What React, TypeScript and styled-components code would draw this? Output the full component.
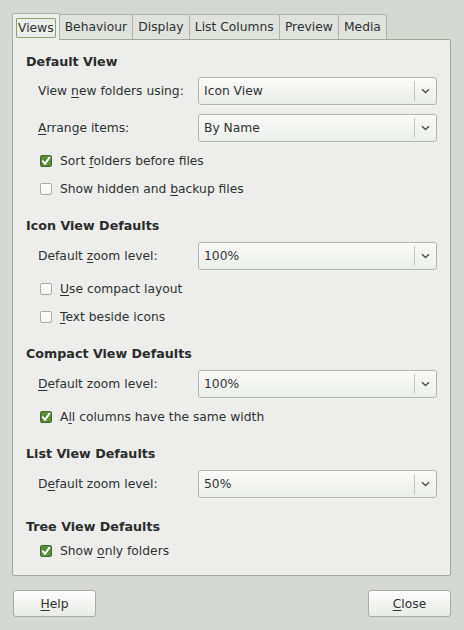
import React from "react";
import styled, { createGlobalStyle } from "styled-components";

const Global = createGlobalStyle`
  html, body { margin: 0; padding: 0; background: #d6d9d3; }
  body { font-family: "DejaVu Sans", "Liberation Sans", sans-serif; }
`;

const Page = styled.div`
  box-sizing: border-box;
  width: 464px;
  height: 630px;
  padding: 13px 13px 13px 12px;
  display: flex;
  flex-direction: column;
  background: #d6d9d3;
  color: #2e3232;
  font-size: 12.3px;
`;

const TabBar = styled.div`
  display: flex;
  align-items: flex-end;
  height: 27px;
  margin-bottom: -1px;
  position: relative;
  z-index: 1;
`;

const Tab = styled.div<{ $active?: boolean }>`
  box-sizing: border-box;
  height: ${(p) => (p.$active ? 27 : 26)}px;
  padding: 0 ${(p) => (p.$active ? 3 : 5.1)}px;
  margin-left: ${(p) => (p.$active ? 0 : -1)}px;
  display: flex;
  align-items: center;
  border: 1px solid #aeb2ab;
  border-bottom: ${(p) => (p.$active ? "none" : "1px solid #a3a89f")};
  border-radius: 2px 2px 0 0;
  background: ${(p) => (p.$active ? "#edeeeb" : "#dfe2dd")};
  &:first-child { margin-left: 0; }
`;

const TabLabel = styled.span<{ $focus?: boolean }>`
  box-sizing: border-box;
  height: 20px;
  display: flex;
  align-items: center;
  padding: 0 ${(p) => (p.$focus ? 1 : 0)}px;
  margin-top: ${(p) => (p.$focus ? 1 : 0)}px;
  border: ${(p) => (p.$focus ? "1px solid #86a86e" : "none")};
  border-radius: 1px;
`;

const Panel = styled.div`
  box-sizing: border-box;
  height: 538px;
  border: 1px solid #a3a89f;
  border-radius: 0 2px 2px 2px;
  background: #edeeeb;
  padding: 14px 13px 0 13px;
  display: flex;
  flex-direction: column;
`;

const Heading = styled.div<{ $mt?: number }>`
  height: 16px;
  line-height: 16px;
  font-weight: bold;
  font-size: 12.7px;
  margin-top: ${(p) => p.$mt ?? 0}px;
  color: #2a2c2c;
`;

const SelectRow = styled.div<{ $mt: number }>`
  display: flex;
  align-items: center;
  height: 28px;
  margin-top: ${(p) => p.$mt}px;
  padding-left: 12px;
`;

const RowLabel = styled.div`
  width: 160px;
  flex: none;
`;

const Select = styled.div`
  box-sizing: border-box;
  flex: 1;
  height: 28px;
  display: flex;
  align-items: center;
  border: 1px solid #b2b6ae;
  border-radius: 3px;
  background: linear-gradient(#fbfbfa, #eceeea);
  box-shadow: 0 1px 0 rgba(255, 255, 255, 0.4);
`;

const SelectText = styled.div`
  flex: 1;
  padding-left: 5px;
`;

const SelectArrow = styled.div`
  width: 21px;
  height: 20px;
  border-left: 1px solid #c2c5bf;
  display: flex;
  align-items: center;
  justify-content: center;
`;

const CheckRow = styled.label<{ $mt: number }>`
  display: flex;
  align-items: center;
  height: 28px;
  margin-top: ${(p) => p.$mt}px;
  padding-left: 14px;
  gap: 8px;
`;

const Box = styled.span<{ $checked?: boolean }>`
  box-sizing: border-box;
  width: 12px;
  height: 12px;
  flex: none;
  border: 1px solid ${(p) => (p.$checked ? "#3f6a27" : "#a9ada5")};
  border-radius: 2px;
  background: ${(p) => (p.$checked ? "#5b8b3b" : "linear-gradient(#ffffff, #f3f4f2)")};
  display: flex;
  align-items: center;
  justify-content: center;
`;

const Mn = styled.span`
  text-decoration: underline;
  text-underline-offset: 2px;
`;

const Footer = styled.div`
  display: flex;
  justify-content: space-between;
  margin-top: 14px;
  padding-left: 1px;
`;

const Button = styled.div`
  box-sizing: border-box;
  width: 83px;
  height: 27px;
  display: flex;
  align-items: center;
  justify-content: center;
  border: 1px solid #a9ada6;
  border-radius: 3px;
  background: linear-gradient(#fdfdfd, #e9ebe7);
`;

const Chevron = () => (
  <svg width="9" height="6" viewBox="0 0 9 6">
    <path d="M1 1.2 L4.5 4.5 L8 1.2" fill="none" stroke="#4a4c4a" strokeWidth="1.3" />
  </svg>
);

const Check = () => (
  <svg width="10" height="10" viewBox="0 0 10 10">
    <path d="M1.8 5.2 L4 8 L8.4 1.6" fill="none" stroke="#ffffff" strokeWidth="2" strokeLinecap="round" strokeLinejoin="round" />
  </svg>
);

const Dropdown = ({ mt, label, value }: { mt: number; label: React.ReactNode; value: string }) => (
  <SelectRow $mt={mt}>
    <RowLabel>{label}</RowLabel>
    <Select>
      <SelectText>{value}</SelectText>
      <SelectArrow>
        <Chevron />
      </SelectArrow>
    </Select>
  </SelectRow>
);

const CheckItem = ({ mt, checked, children }: { mt: number; checked?: boolean; children: React.ReactNode }) => (
  <CheckRow $mt={mt}>
    <Box $checked={checked}>{checked && <Check />}</Box>
    <span>{children}</span>
  </CheckRow>
);

export default function App() {
  return (
    <>
      <Global />
      <Page>
        <TabBar>
          <Tab $active>
            <TabLabel $focus>Views</TabLabel>
          </Tab>
          <Tab><TabLabel>Behaviour</TabLabel></Tab>
          <Tab><TabLabel>Display</TabLabel></Tab>
          <Tab><TabLabel>List Columns</TabLabel></Tab>
          <Tab><TabLabel>Preview</TabLabel></Tab>
          <Tab><TabLabel>Media</TabLabel></Tab>
        </TabBar>
        <Panel>
          <Heading>Default View</Heading>
          <Dropdown mt={7} label={<>View <Mn>n</Mn>ew folders using:</>} value="Icon View" />
          <Dropdown mt={9} label={<><Mn>A</Mn>rrange items:</>} value="By Name" />
          <CheckItem mt={5} checked>Sort <Mn>f</Mn>olders before files</CheckItem>
          <CheckItem mt={0}>Show hidden and <Mn>b</Mn>ackup files</CheckItem>

          <Heading $mt={15}>Icon View Defaults</Heading>
          <Dropdown mt={8} label={<>Default <Mn>z</Mn>oom level:</>} value="100%" />
          <CheckItem mt={5}><Mn>U</Mn>se compact layout</CheckItem>
          <CheckItem mt={0}><Mn>T</Mn>ext beside icons</CheckItem>

          <Heading $mt={15}>Compact View Defaults</Heading>
          <Dropdown mt={8} label={<><Mn>D</Mn>efault zoom level:</>} value="100%" />
          <CheckItem mt={5} checked>A<Mn>l</Mn>l columns have the same width</CheckItem>

          <Heading $mt={15}>List View Defaults</Heading>
          <Dropdown mt={8} label={<>D<Mn>e</Mn>fault zoom level:</>} value="50%" />

          <Heading $mt={21}>Tree View Defaults</Heading>
          <CheckItem mt={2} checked>Show <Mn>o</Mn>nly folders</CheckItem>
        </Panel>
        <Footer>
          <Button><span><Mn>H</Mn>elp</span></Button>
          <Button><span><Mn>C</Mn>lose</span></Button>
        </Footer>
      </Page>
    </>
  );
}
